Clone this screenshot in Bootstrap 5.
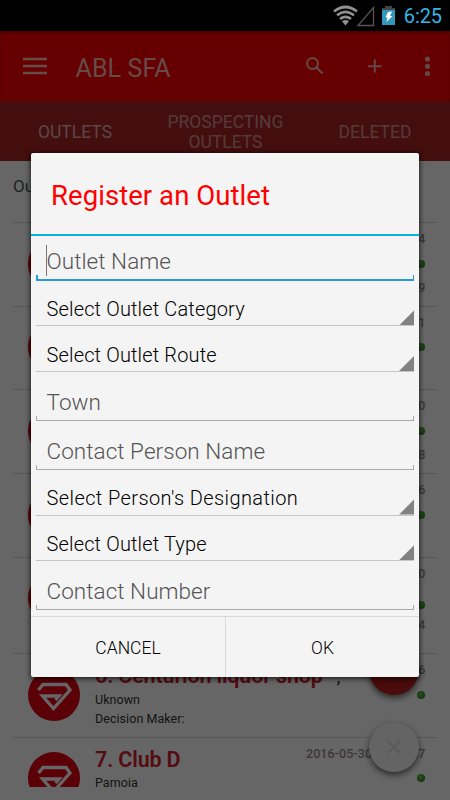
<!DOCTYPE html>
<html lang="en">
<head>
<meta charset="utf-8">
<meta name="viewport" content="width=device-width, initial-scale=1">
<title>ABL SFA</title>
<link href="https://cdn.jsdelivr.net/npm/bootstrap@5.3.0/dist/css/bootstrap.min.css" rel="stylesheet">
<style>
body{font-family:Roboto,"Noto Sans",sans-serif;background:#fff;width:450px;height:800px;line-height:1}
.status-strip{height:31px;background:#000;z-index:3}
.status-strip .clock{color:#33b5e5;font-size:20px;letter-spacing:-.1px}
.app-head{height:70px;background:#f00;color:#fff;box-shadow:inset 0 2px 2px #8008}
.menu-icon{margin-left:23px}
.app-title{font-size:25px;color:#fffb;padding:4px 0 0 28.5px;letter-spacing:.1px}
.tab-strip{height:60px;background:#aa2323;font-size:17.5px;line-height:20px;color:#ffffff80;padding-top:1px}
.tab-strip .current{color:#ffffffa8}
.tab-strip .middle{padding-left:1px}
.outlets{height:626px;margin:0 13px}
.list-label{height:61px;padding-top:17px;font-size:17px;color:#555}
.outlet{height:83.7px;border-top:1.5px solid #d8d8d8}
.outlet.tall{height:96.5px}
.logo-col{width:82px;padding:14.5px 0 0 15px;flex:none}
.name{font-size:21.5px;font-weight:600;color:#d5202a;letter-spacing:-.15px;line-height:24px}
.name .tick{font-size:18px;font-weight:400;color:#222;margin-left:14px}
.text-col{width:0;padding-top:10px}
.sub{font-size:12.5px;color:#333;line-height:19px;letter-spacing:.05px;font-weight:400;position:relative;top:1px}
.stamp{font-size:12.5px;font-weight:500;color:#978a8a;height:14px;line-height:14px;letter-spacing:.1px}
.meta-col{width:150px;padding-top:9px;margin-right:11.5px;flex:none}
.online{width:8px;height:8px;margin:13.5px 1px 13px 0;border-radius:50%;background:radial-gradient(circle at 40% 35%,#6fc05b,#3d9c2b 50%,#2a701e)}
.tall .online{margin:20px 1px 9px 0}
.fab-a,.fab-b{position:absolute;left:369px;width:50px;height:50px;border-radius:50%;box-shadow:0 3px 6px #0009}
.fab-a{top:645px;background:#b71c1c}
.fab-b{top:722px;background:#fafafa}
.scrim{position:absolute;inset:31px 0 0 0;background:#0009}
.dialog-box{position:absolute;left:31px;top:153px;width:388px;height:524px;background:#f4f4f4;border-radius:2px;box-shadow:0 1px 5px 1px #000a;color:#000;font-weight:300}
.dialog-title{height:81px;padding:4px 0 0 20px;font-size:27.5px;color:#f00;font-weight:400;letter-spacing:.06px}
.blue-rule{height:2px;background:#0ab0e6}
.field{margin:0 5px;padding:13px 0 0 10.5px;height:49px;font-size:22.5px;letter-spacing:.05px;color:#555;border-bottom:1px solid #aaa;position:relative}
.field::before,.field::after{content:"";position:absolute;bottom:0;width:1px;height:4px;background:#aaa}
.field::before{left:0}.field::after{right:0}
.field.active{height:45px;border-bottom:2px solid #2a9ad6;padding-top:8px}
.field.active::before,.field.active::after{background:#2a9ad6;width:1.5px}
.caret{position:absolute;left:10px;top:9px;width:1px;height:31px;background:#777}
.picker{margin:0 5px;padding:12px 0 0 10.5px;height:45.75px;font-size:20px;letter-spacing:.15px;border-bottom:1px solid #c5c5c5;position:relative}
.picker.wide{letter-spacing:.4px}
.picker::after{content:"";position:absolute;right:0;bottom:0;width:15px;height:15px;background:#828282;clip-path:polygon(100% 0,100% 100%,0 100%)}
.actions{margin-top:6px;height:61px;border-top:1px solid #d9d9d9;font-size:17.5px}
.actions button{border:0;background:none;color:#000;padding:3px 0 0;font-weight:300}
.actions button+button{border-left:1px solid #d9d9d9}
</style>
<script src="https://cdn.jsdelivr.net/npm/bootstrap@5.3.0/dist/js/bootstrap.bundle.min.js"></script>
</head>
<body class="position-relative overflow-hidden m-0">
<svg class="d-none">
  <symbol id="brand" viewBox="0 0 52 52"><circle cx="26" cy="26" r="26" fill="#e1000f"/><path d="M10.500 21 15 15.500H38L42 21 25.500 39.500 14.500 27H31L27.500 31" fill="none" stroke="#fff" stroke-width="3.300"/></symbol>
</svg>
<div class="status-strip d-flex justify-content-end align-items-center position-relative">
  <svg width="64" height="22" viewBox="0 0 64 22" class="me-2">
    <g fill="none" stroke="#909090" stroke-width="2.7"><path d="M2 6.500Q13.500-2.500 25 6.500"/><path d="M5 10.300Q13.500 3.600 22 10.300"/><path d="M8 14Q13.500 9.700 19 14"/></g><path d="M10 16.300Q13.500 13.500 17 16.300L13.500 20.500Z" fill="#909090"/>
    <path d="M26 20.500H41.500V2.500Z" fill="none" stroke="#555" stroke-width="1.300"/>
    <path d="M53 1h7v2h3v2H50V3h3z" fill="#444"/><path d="M50 5h13v15H50z" fill="#3296bd"/><path d="m56 7 4-.5-2 4.500h2.500L54.500 17l1-4.500H53.500z" fill="#fff"/>
  </svg>
  <span class="clock me-2">6:25</span>
</div>
<header class="app-head d-flex align-items-center">
  <svg width="24" height="18" viewBox="0 0 24 18" class="menu-icon flex-shrink-0"><path d="M0 2h24M0 9h24M0 16h24" stroke="#fffb" stroke-width="2.500"/></svg>
  <span class="app-title me-auto">ABL SFA</span>
  <svg width="144" height="24" viewBox="0 0 144 24" fill="none" stroke="#ffffffb0" stroke-width="2"><circle cx="6.500" cy="9.500" r="5.500"/><path d="m10.500 13.500 6 6" stroke-width="2.300"/><path d="M62 12.300H75.500M68.800 5.500V18.500"/><g fill="#ffffffb0" stroke="none"><circle cx="121.500" cy="5" r="2.600"/><circle cx="121.500" cy="12.300" r="2.600"/><circle cx="121.500" cy="19.600" r="2.600"/></g></svg>
</header>
<nav class="tab-strip row g-0 align-items-center text-center">
  <span class="col-4 current">OUTLETS</span><span class="col-4 middle">PROSPECTING<br>OUTLETS</span><span class="col-4">DELETED</span>
</nav>
<main class="outlets overflow-hidden">
  <div class="list-label">Ou</div>
  <section id="list"></section>
</main>
<div class="fab-a"></div>
<div class="fab-b d-flex align-items-center justify-content-center"><svg width="14" height="14"><path d="m1 1 12 12M13 1 1 13" stroke="#ddd" stroke-width="2"/></svg></div>
<div class="scrim"></div>
<div class="dialog-box d-flex flex-column" role="dialog">
  <div class="dialog-title d-flex align-items-center">Register an Outlet</div>
  <div class="blue-rule"></div>
  <div class="field active d-flex align-items-center"><i class="caret"></i>Outlet Name</div>
  <div class="picker d-flex align-items-center">Select Outlet Category</div>
  <div class="picker d-flex align-items-center">Select Outlet Route</div>
  <div class="field d-flex align-items-center">Town</div>
  <div class="field d-flex align-items-center">Contact Person Name</div>
  <div class="picker wide d-flex align-items-center">Select Person's Designation</div>
  <div class="picker d-flex align-items-center">Select Outlet Type</div>
  <div class="field d-flex align-items-center">Contact Number</div>
  <div class="actions d-flex"><button class="w-50">CANCEL</button><button class="w-50">OK</button></div>
</div>
<script>
const rows=[["","","","4","9"],["","","","1",""],["","","","0","8"],["","","","6",""],["","","","0","4"],["6. Centurion liquor shop<span class='tick'>,</span>","Uknown","Decision Maker:","6",""],["7. Club D","Pamoja","","2016-05-30 10:22:27",""]];
document.getElementById("list").innerHTML=rows.map((r,i)=>`<div class="outlet d-flex ${i==4?"tall":""}">
<div class="logo-col"><svg width="52" height="52"><use href="#brand"/></svg></div>
<div class="text-col flex-grow-1 text-nowrap"><div class="name">${r[0]}</div><div class="sub">${r[1]}</div><div class="sub">${r[2]}</div></div>
<div class="meta-col d-flex flex-column align-items-end"><span class="stamp text-nowrap">${r[3]}</span><i class="online"></i><span class="stamp">${r[4]}</span></div></div>`).join("");
</script>
</body>
</html>
